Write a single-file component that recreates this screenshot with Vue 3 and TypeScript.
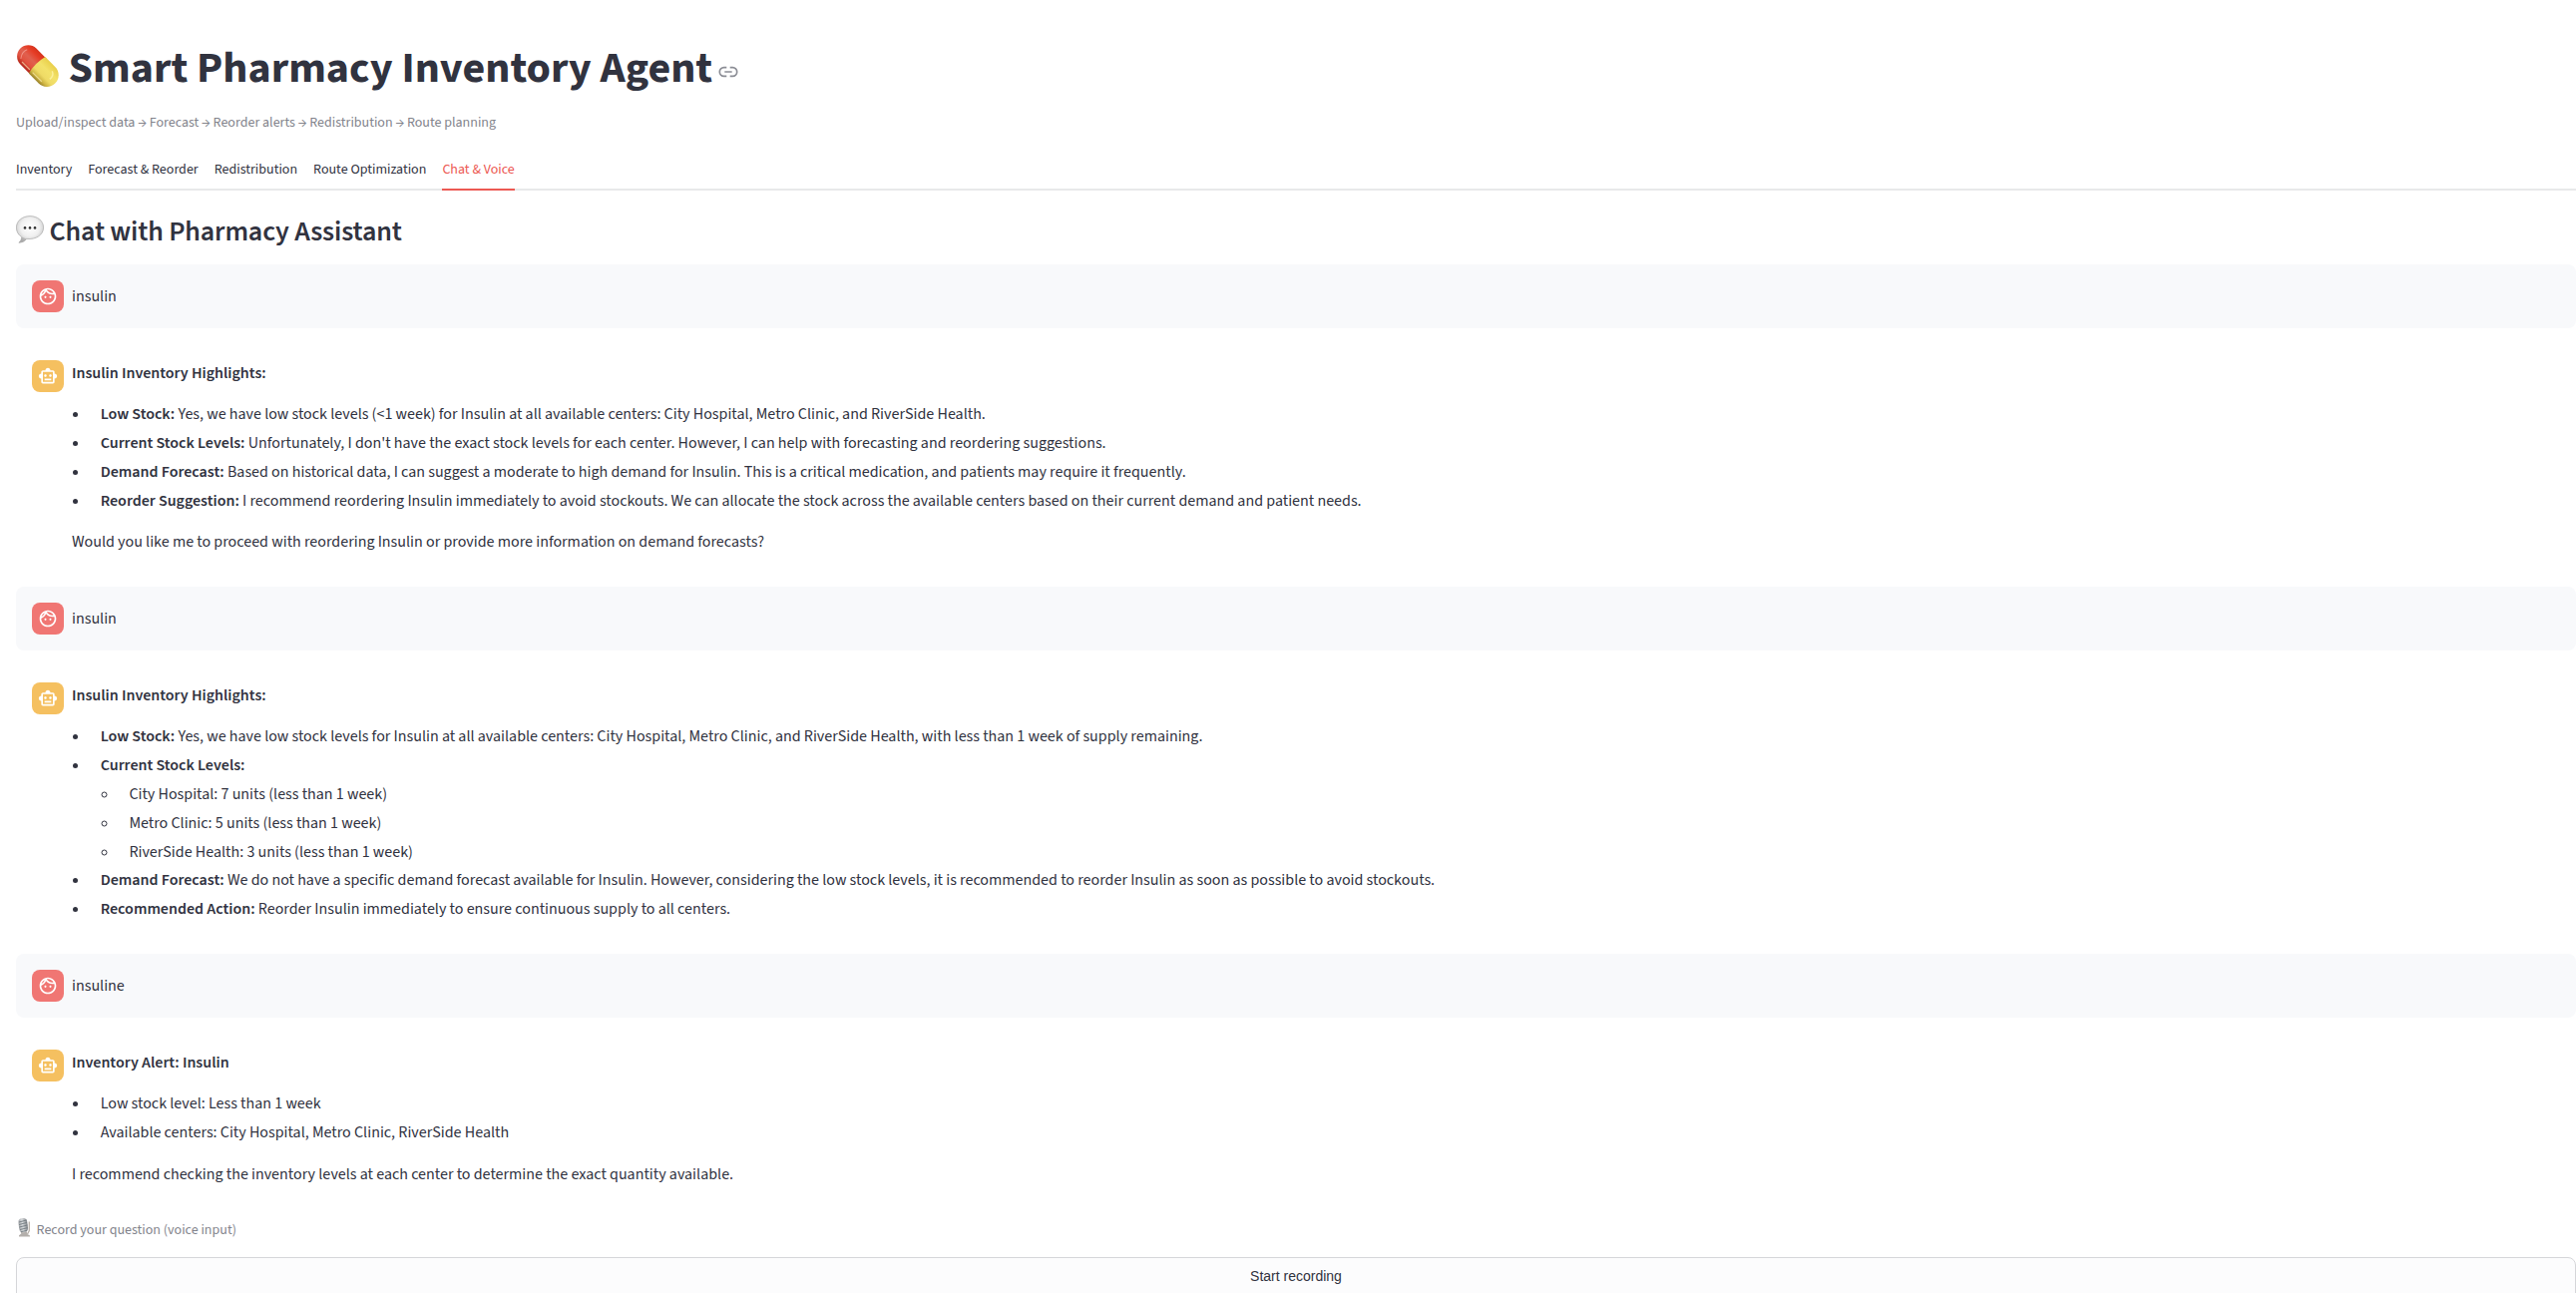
<script setup lang="ts">
interface Item {
  label?: string
  text?: string
  children?: string[]
}
interface Message {
  role: 'user' | 'assistant'
  title: string
  items?: Item[]
  closing?: string
}

const steps = ['Upload/inspect data', 'Forecast', 'Reorder alerts', 'Redistribution', 'Route planning']
const tabs = ['Inventory', 'Forecast & Reorder', 'Redistribution', 'Route Optimization', 'Chat & Voice']
const activeTab = 'Chat & Voice'

const messages: Message[] = [
  { role: 'user', title: 'insulin' },
  {
    role: 'assistant',
    title: 'Insulin Inventory Highlights:',
    items: [
      { label: 'Low Stock:', text: 'Yes, we have low stock levels (<1 week) for Insulin at all available centers: City Hospital, Metro Clinic, and RiverSide Health.' },
      { label: 'Current Stock Levels:', text: "Unfortunately, I don't have the exact stock levels for each center. However, I can help with forecasting and reordering suggestions." },
      { label: 'Demand Forecast:', text: 'Based on historical data, I can suggest a moderate to high demand for Insulin. This is a critical medication, and patients may require it frequently.' },
      { label: 'Reorder Suggestion:', text: 'I recommend reordering Insulin immediately to avoid stockouts. We can allocate the stock across the available centers based on their current demand and patient needs.' },
    ],
    closing: 'Would you like me to proceed with reordering Insulin or provide more information on demand forecasts?',
  },
  { role: 'user', title: 'insulin' },
  {
    role: 'assistant',
    title: 'Insulin Inventory Highlights:',
    items: [
      { label: 'Low Stock:', text: 'Yes, we have low stock levels for Insulin at all available centers: City Hospital, Metro Clinic, and RiverSide Health, with less than 1 week of supply remaining.' },
      {
        label: 'Current Stock Levels:',
        children: [
          'City Hospital: 7 units (less than 1 week)',
          'Metro Clinic: 5 units (less than 1 week)',
          'RiverSide Health: 3 units (less than 1 week)',
        ],
      },
      { label: 'Demand Forecast:', text: 'We do not have a specific demand forecast available for Insulin. However, considering the low stock levels, it is recommended to reorder Insulin as soon as possible to avoid stockouts.' },
      { label: 'Recommended Action:', text: 'Reorder Insulin immediately to ensure continuous supply to all centers.' },
    ],
  },
  { role: 'user', title: 'insuline' },
  {
    role: 'assistant',
    title: 'Inventory Alert: Insulin',
    items: [
      { text: 'Low stock level: Less than 1 week' },
      { text: 'Available centers: City Hospital, Metro Clinic, RiverSide Health' },
    ],
    closing: 'I recommend checking the inventory levels at each center to determine the exact quantity available.',
  },
]
</script>

<template>
  <main class="page">
    <h1 class="title">
      <svg class="pill" viewBox="0 0 44 44" aria-hidden="true">
        <defs>
          <linearGradient id="pillRed" x1="0" y1="0" x2="0" y2="1">
            <stop offset="0" stop-color="#d5331d" />
            <stop offset=".2" stop-color="#e63c25" />
            <stop offset=".5" stop-color="#e0604f" />
            <stop offset=".75" stop-color="#e2523f" />
            <stop offset="1" stop-color="#b3261a" />
          </linearGradient>
          <linearGradient id="pillYellow" x1="0" y1="0" x2="0" y2="1">
            <stop offset="0" stop-color="#e9cf4a" />
            <stop offset=".35" stop-color="#f3e26a" />
            <stop offset=".65" stop-color="#efdb66" />
            <stop offset=".85" stop-color="#cfb543" />
            <stop offset="1" stop-color="#98802a" />
          </linearGradient>
        </defs>
        <g transform="translate(21.8 22) rotate(45)">
          <path d="M1 -11.3H-13.3A11.3 11.3 0 0 0 -13.3 11.3H1Z" fill="url(#pillRed)" />
          <path d="M-1 -11.7H13A11.7 11.7 0 0 1 13 11.7H-1Q-4 0 -1 -11.7Z" fill="url(#pillYellow)" />
          <path d="M-17 7C-20 3 -20.500 -1 -19 -4" fill="none" stroke="#f7a89c" stroke-width="1" opacity=".7" />
          <path d="M-14 8.300H-3M1 8.300H14" fill="none" stroke="#fff3c0" stroke-width="1.200" opacity=".6" />
          <path d="M14 -6.500C17.500 -5 18.500 -2 18 1" fill="none" stroke="#fff7b0" stroke-width="1.500" opacity=".7" />
        </g>
      </svg>
      <span>Smart Pharmacy Inventory Agent</span>
      <svg class="link" viewBox="0 0 20 12" fill="none" stroke="#8b8d95" stroke-width="1.700" aria-hidden="true">
        <path d="M8.300 1.700H5.600a4.300 4.300 0 0 0 0 8.600H8.300M11.700 1.700h2.700a4.300 4.300 0 0 1 0 8.600H11.700M6.300 6h7.400" />
      </svg>
    </h1>

    <p class="caption">
      <template v-for="(step, i) in steps" :key="step"><template v-if="i > 0"> → </template>{{ step }}</template>
    </p>

    <nav class="tabs">
      <button v-for="tab in tabs" :key="tab" class="tab" :class="{ active: tab === activeTab }">{{ tab }}</button>
    </nav>

    <h3 class="subtitle">
      <svg class="bubble" viewBox="0 0 28 28" aria-hidden="true">
        <defs>
          <radialGradient id="bubbleFill" cx=".5" cy=".42" r=".58">
            <stop offset="0" stop-color="#ffffff" />
            <stop offset=".6" stop-color="#f0f0f0" />
            <stop offset=".85" stop-color="#d6d6d6" />
            <stop offset="1" stop-color="#acacac" />
          </radialGradient>
        </defs>
        <path d="M14 .6C6.300 .6 .4 5.500 .4 12C.4 16.300 2.500 19.600 5.700 21.500C5.800 23.600 4.700 25.500 2.900 27.200C6.300 27 9 25.600 10.700 23.400C20 24.500 27.600 19.400 27.600 12C27.600 5.500 21.700 .6 14 .6Z" fill="url(#bubbleFill)" stroke="#a9a9a9" stroke-width=".7" />
        <path d="M2.900 27.200C6.300 27 9 25.600 10.700 23.400L5.700 21.500C5.800 23.600 4.700 25.500 2.900 27.200Z" fill="#aaa" opacity=".7" />
        <g fill="#333">
          <circle cx="9" cy="12.400" r="1.300" />
          <circle cx="14" cy="12.400" r="1.300" />
          <circle cx="19" cy="12.400" r="1.300" />
        </g>
      </svg>
      <span>Chat with Pharmacy Assistant</span>
    </h3>

    <section class="chat">
      <article v-for="(message, m) in messages" :key="m" class="message" :class="message.role">
        <div class="avatar">
          <svg v-if="message.role === 'user'" viewBox="0 0 24 24" fill="currentColor" aria-hidden="true">
            <path d="M10.250 13c0 .69-.56 1.250-1.250 1.250S7.750 13.690 7.750 13s.56-1.250 1.250-1.250 1.250.56 1.250 1.250zM15 11.750c-.69 0-1.250.56-1.250 1.250s.56 1.250 1.250 1.250 1.250-.56 1.250-1.250-.56-1.250-1.250-1.250zm7 .25c0 5.520-4.480 10-10 10S2 17.520 2 12 6.480 2 12 2s10 4.480 10 10zM10.660 4.120C12.060 6.440 14.600 8 17.500 8c.46 0 .91-.05 1.340-.12C17.440 5.560 14.900 4 12 4c-.46 0-.91.05-1.340.12zM4.420 9.470c1.710-.97 3.030-2.550 3.660-4.440C6.370 6 5.050 7.580 4.420 9.470zM20 12c0-.78-.12-1.530-.33-2.240-.7.15-1.420.24-2.170.24-3.130 0-5.920-1.440-7.760-3.690C8.690 8.870 6.600 10.880 4 11.860c.01.04 0 .09 0 .14 0 4.410 3.590 8 8 8s8-3.590 8-8z" />
          </svg>
          <svg v-else viewBox="0 0 24 24" fill="currentColor" aria-hidden="true">
            <path d="M20 9V7c0-1.100-.9-2-2-2h-3c0-1.660-1.340-3-3-3S9 3.340 9 5H6c-1.100 0-2 .9-2 2v2c-1.660 0-3 1.340-3 3s1.340 3 3 3v4c0 1.100.9 2 2 2h12c1.100 0 2-.9 2-2v-4c1.660 0 3-1.340 3-3s-1.340-3-3-3zm-2 10H6V7h12v12zm-9-6c-.83 0-1.500-.67-1.500-1.500S8.170 10 9 10s1.500.67 1.500 1.500S9.830 13 9 13zm7.500-1.500c0 .83-.67 1.500-1.500 1.500s-1.500-.67-1.500-1.500.67-1.500 1.500-1.500 1.500.67 1.500 1.500zM8 15h8v2H8v-2z" />
          </svg>
        </div>
        <div class="body">
          <p v-if="message.role === 'user'">{{ message.title }}</p>
          <p v-else><strong>{{ message.title }}</strong></p>
          <ul v-if="message.items">
            <li v-for="(item, i) in message.items" :key="i">
              <strong v-if="item.label">{{ item.label }}</strong>{{ item.label && item.text ? ' ' : '' }}{{ item.text }}
              <ul v-if="item.children">
                <li v-for="child in item.children" :key="child">{{ child }}</li>
              </ul>
            </li>
          </ul>
          <p v-if="message.closing">{{ message.closing }}</p>
        </div>
      </article>
    </section>

    <p class="caption record">
      <svg class="mic" viewBox="0 0 17 20" aria-hidden="true">
        <defs>
          <linearGradient id="micHead" x1="0" y1="0" x2="1" y2="0">
            <stop offset="0" stop-color="#a3a6a9" />
            <stop offset=".45" stop-color="#d9dcde" />
            <stop offset="1" stop-color="#7d8185" />
          </linearGradient>
        </defs>
        <path d="M13.300 4.500V13.500L11.500 17" fill="none" stroke="#b9b2aa" stroke-width="1.300" />
        <path d="M4.500 14H10.500L11.500 17L14 18.500V19.500H3V18.300L5.300 16.600Z" fill="#b3afab" />
        <rect x="2.800" y="1" width="8.800" height="14.300" rx="4.100" transform="rotate(-7 7 8)" fill="url(#micHead)" />
        <path d="M3 5L10.600 3M3 7.500L11 5.400M3.300 10L11.500 8M4 12.500L11.500 10.700M5 14.700L11 13.300" stroke="#727a80" stroke-width=".9" />
      </svg>
      <span>Record your question (voice input)</span>
    </p>

    <button class="start">Start recording</button>
  </main>
</template>

<style>
body {
  background: #fff;
}
</style>

<style scoped>
.page {
  box-sizing: border-box;
  height: 1296px;
  overflow: hidden;
  padding: 42px 0 0 16px;
  color: #31333f;
  font-family: 'Source Sans 3', 'Source Sans Pro', 'Noto Sans', sans-serif;
  font-size: 16px;
  line-height: 1.6;
}

h1,
h3,
p,
ul {
  margin: 0;
  padding: 0;
}

button {
  font-family: inherit;
  color: inherit;
  background: none;
  border: 0;
  padding: 0;
}

.title {
  display: flex;
  align-items: center;
  height: 53px;
  font-size: 44px;
  font-weight: 700;
  line-height: 53px;
}

.pill {
  width: 44px;
  height: 44px;
  margin: -6px 8.600px 0 0;
}

.link {
  width: 20px;
  height: 12px;
  margin: 7px 0 0 6px;
}

.caption {
  margin-top: 17px;
  font-size: 14px;
  line-height: 22.4px;
  color: #83848c;
}

.tabs {
  display: flex;
  gap: 16px;
  height: 39.600px;
  margin-top: 15px;
  border-bottom: 2px solid #e8e9ea;
}

.tab {
  height: 41.600px;
  font-size: 14px;
  line-height: 39px;
  padding-top: 1.500px;
  border-bottom: 2px solid transparent;
}

.tab.active {
  color: #ec5953;
  border-color: #ec5953;
}

.subtitle {
  display: flex;
  align-items: center;
  height: 34px;
  margin-top: 24px;
  font-size: 28px;
  font-weight: 600;
  letter-spacing: -0.150px;
  line-height: 34px;
}

.bubble {
  width: 28px;
  height: 28px;
  margin: -4px 5.600px 0 0;
}

.chat {
  display: flex;
  flex-direction: column;
  gap: 16px;
  margin-top: 16px;
}

.message {
  display: flex;
  align-items: flex-start;
  gap: 8px;
  padding: 16px;
  border-radius: 8px;
}

.message.user {
  align-items: center;
  background: #f8f9fb;
}

.message.assistant:last-child {
  padding-bottom: 0;
}

.avatar {
  display: flex;
  flex: none;
  align-items: center;
  justify-content: center;
  width: 32px;
  height: 32px;
  border-radius: 8px;
  color: #fff;
}

.avatar svg {
  width: 20px;
  height: 20px;
}

.user .avatar {
  background: #f07673;
}

.assistant .avatar {
  background: #f5c060;
}

.body {
  padding-top: 0.700px;
  margin-bottom: -0.700px;
}

.user .body {
  padding-top: 1.400px;
  margin-bottom: 0;
}

strong {
  font-weight: 600;
}

.body > * + * {
  margin-top: 16px;
}

ul {
  list-style: disc;
}

ul ul {
  list-style: circle;
}

li {
  margin: 3.200px 0 3.200px 18.400px;
  padding-left: 10.300px;
}

.body > ul > li:first-child {
  margin-top: 0;
}

.body > ul > li:last-child {
  margin-bottom: 0;
}

.record {
  display: flex;
  align-items: center;
  margin-top: 32px;
}

.mic {
  width: 17px;
  height: 20px;
  margin: -5px 3.600px 0 0;
}

.start {
  display: block;
  box-sizing: border-box;
  width: 100%;
  height: 48px;
  margin-top: 16px;
  padding-bottom: 10px;
  border: 1px solid #d5d6d9;
  border-radius: 8px;
  background: #fcfcfd;
  font: 14px 'Liberation Sans', Arial, sans-serif;
}
</style>
